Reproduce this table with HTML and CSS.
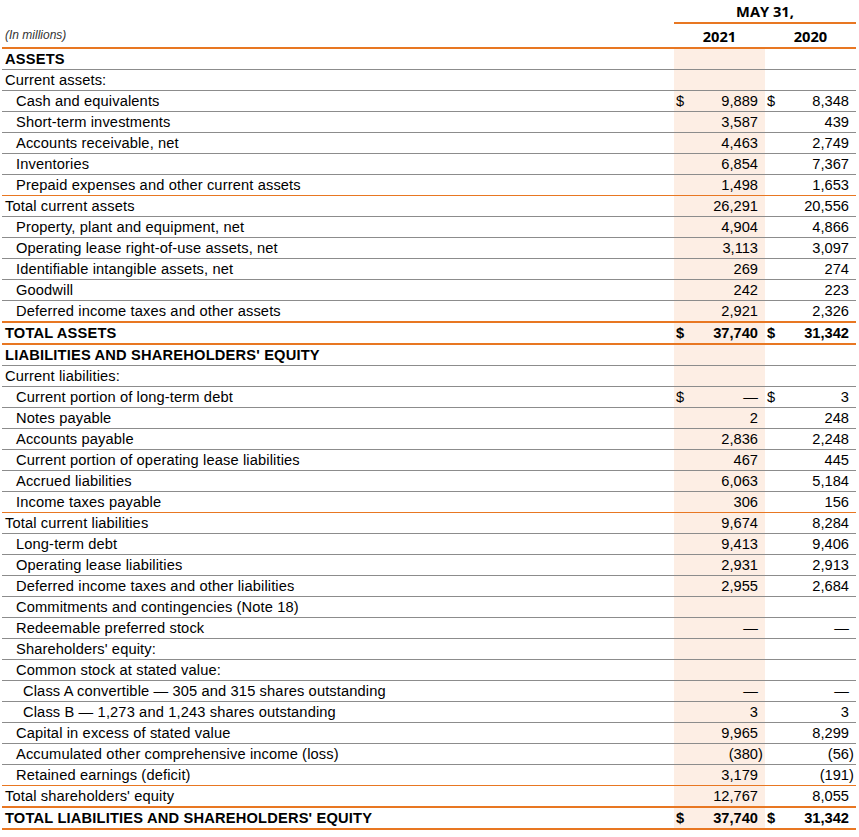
FILE: index.html
```html
<!DOCTYPE html>
<html lang="en">
<head>
<meta charset="utf-8">
<title>Consolidated Balance Sheets</title>
<link rel="stylesheet" href="styles.css">
</head>
<body>
<div class="wrap">
<table class="bs">
<colgroup><col class="cl"><col class="cn"><col class="cn"></colgroup>
<thead>
<tr class="h1"><th class="blank"></th><th class="may" colspan="2">MAY 31,</th></tr>
<tr class="h2"><th class="unit">(In millions)</th><th class="yr">2021</th><th class="yr">2020</th></tr>
</thead>
<tbody>
<tr class="sec"><td class="lab">ASSETS</td><td class="n c21"></td><td class="n"></td></tr>
<tr><td class="lab">Current assets:</td><td class="n c21"></td><td class="n"></td></tr>
<tr><td class="lab i1">Cash and equivalents</td><td class="n c21"><span class="cur">$</span>9,889</td><td class="n"><span class="cur">$</span>8,348</td></tr>
<tr><td class="lab i1">Short-term investments</td><td class="n c21">3,587</td><td class="n">439</td></tr>
<tr><td class="lab i1">Accounts receivable, net</td><td class="n c21">4,463</td><td class="n">2,749</td></tr>
<tr><td class="lab i1">Inventories</td><td class="n c21">6,854</td><td class="n">7,367</td></tr>
<tr class="o1"><td class="lab i1">Prepaid expenses and other current assets</td><td class="n c21">1,498</td><td class="n">1,653</td></tr>
<tr><td class="lab">Total current assets</td><td class="n c21">26,291</td><td class="n">20,556</td></tr>
<tr><td class="lab i1">Property, plant and equipment, net</td><td class="n c21">4,904</td><td class="n">4,866</td></tr>
<tr><td class="lab i1">Operating lease right-of-use assets, net</td><td class="n c21">3,113</td><td class="n">3,097</td></tr>
<tr><td class="lab i1">Identifiable intangible assets, net</td><td class="n c21">269</td><td class="n">274</td></tr>
<tr><td class="lab i1">Goodwill</td><td class="n c21">242</td><td class="n">223</td></tr>
<tr class="o2"><td class="lab i1">Deferred income taxes and other assets</td><td class="n c21">2,921</td><td class="n">2,326</td></tr>
<tr class="o2 tot"><td class="lab">TOTAL ASSETS</td><td class="n c21"><span class="cur">$</span>37,740</td><td class="n"><span class="cur">$</span>31,342</td></tr>
<tr class="sec"><td class="lab">LIABILITIES AND SHAREHOLDERS' EQUITY</td><td class="n c21"></td><td class="n"></td></tr>
<tr><td class="lab">Current liabilities:</td><td class="n c21"></td><td class="n"></td></tr>
<tr><td class="lab i1">Current portion of long-term debt</td><td class="n c21"><span class="cur">$</span>—</td><td class="n"><span class="cur">$</span>3</td></tr>
<tr><td class="lab i1">Notes payable</td><td class="n c21">2</td><td class="n">248</td></tr>
<tr><td class="lab i1">Accounts payable</td><td class="n c21">2,836</td><td class="n">2,248</td></tr>
<tr><td class="lab i1">Current portion of operating lease liabilities</td><td class="n c21">467</td><td class="n">445</td></tr>
<tr><td class="lab i1">Accrued liabilities</td><td class="n c21">6,063</td><td class="n">5,184</td></tr>
<tr class="o1"><td class="lab i1">Income taxes payable</td><td class="n c21">306</td><td class="n">156</td></tr>
<tr><td class="lab">Total current liabilities</td><td class="n c21">9,674</td><td class="n">8,284</td></tr>
<tr><td class="lab i1">Long-term debt</td><td class="n c21">9,413</td><td class="n">9,406</td></tr>
<tr><td class="lab i1">Operating lease liabilities</td><td class="n c21">2,931</td><td class="n">2,913</td></tr>
<tr><td class="lab i1">Deferred income taxes and other liabilities</td><td class="n c21">2,955</td><td class="n">2,684</td></tr>
<tr><td class="lab i1">Commitments and contingencies (Note 18)</td><td class="n c21"></td><td class="n"></td></tr>
<tr><td class="lab i1">Redeemable preferred stock</td><td class="n c21">—</td><td class="n">—</td></tr>
<tr><td class="lab i1">Shareholders' equity:</td><td class="n c21"></td><td class="n"></td></tr>
<tr><td class="lab i1">Common stock at stated value:</td><td class="n c21"></td><td class="n"></td></tr>
<tr><td class="lab i2">Class A convertible — 305 and 315 shares outstanding</td><td class="n c21">—</td><td class="n">—</td></tr>
<tr><td class="lab i2">Class B — 1,273 and 1,243 shares outstanding</td><td class="n c21">3</td><td class="n">3</td></tr>
<tr><td class="lab i1">Capital in excess of stated value</td><td class="n c21">9,965</td><td class="n">8,299</td></tr>
<tr><td class="lab i1">Accumulated other comprehensive income (loss)</td><td class="n c21">(380<span class="rp">)</span></td><td class="n">(56<span class="rp">)</span></td></tr>
<tr class="o1"><td class="lab i1">Retained earnings (deficit)</td><td class="n c21">3,179</td><td class="n">(191<span class="rp">)</span></td></tr>
<tr class="o2"><td class="lab">Total shareholders' equity</td><td class="n c21">12,767</td><td class="n">8,055</td></tr>
<tr class="o2 tot"><td class="lab">TOTAL LIABILITIES AND SHAREHOLDERS' EQUITY</td><td class="n c21"><span class="cur">$</span>37,740</td><td class="n"><span class="cur">$</span>31,342</td></tr>
</tbody>
</table>
</div>
</body>
</html>
```
FILE: styles.css
```css
body {
  margin: 0;
  background: #ffffff;
  color: #000000;
  font-family: "Liberation Sans", Arial, sans-serif;
  font-size: 11pt;
}

.wrap {
  padding: 0 3px 0 2px;
}

.bs {
  width: 854px;
  table-layout: fixed;
  border-collapse: separate;
  border-spacing: 0;
}

.cl { width: 672px; }
.cn { width: 91px; }

.bs th {
  padding: 0;
  font-family: "Open Sans", "Liberation Sans", sans-serif;
  font-weight: 700;
  font-size: 11pt;
  color: #000000;
  white-space: nowrap;
}

.h1 th {
  line-height: 22px;
}

.h1 .may {
  text-align: center;
  border-bottom: 2px solid #e87722;
}

.h2 th {
  line-height: 23px;
  border-bottom: 2px solid #e87722;
}

.h2 .yr {
  text-align: center;
  padding-top: 2px;
  line-height: 21px;
}

.h2 .unit {
  text-align: left;
  font-family: "Liberation Sans", Arial, sans-serif;
  font-style: italic;
  font-weight: 400;
  font-size: 12px;
  color: #333333;
  padding-left: 3px;
}

.bs td {
  padding: 0;
  line-height: 20px;
  border-bottom: 1px solid #8c8c8c;
  white-space: nowrap;
}

.lab {
  padding-left: 3px !important;
  letter-spacing: 0.13px;
}

.lab.i1 { padding-left: 14px !important; }
.lab.i2 { padding-left: 21px !important; }

.sec .lab,
.tot td {
  font-weight: 700;
}

.sec .lab,
.tot .lab {
  letter-spacing: 0.18px;
}

.n {
  text-align: right;
  padding-right: 7px !important;
  padding-left: 2px !important;
}

.c21 {
  background: #fdeee4;
}

.cur {
  float: left;
}

.rp {
  margin-right: -0.333em;
}

.bs tr.o1 td {
  border-bottom: 1px solid #e87722;
}

.bs tr.o2 td {
  border-bottom: 2px solid #e87722;
}
```
